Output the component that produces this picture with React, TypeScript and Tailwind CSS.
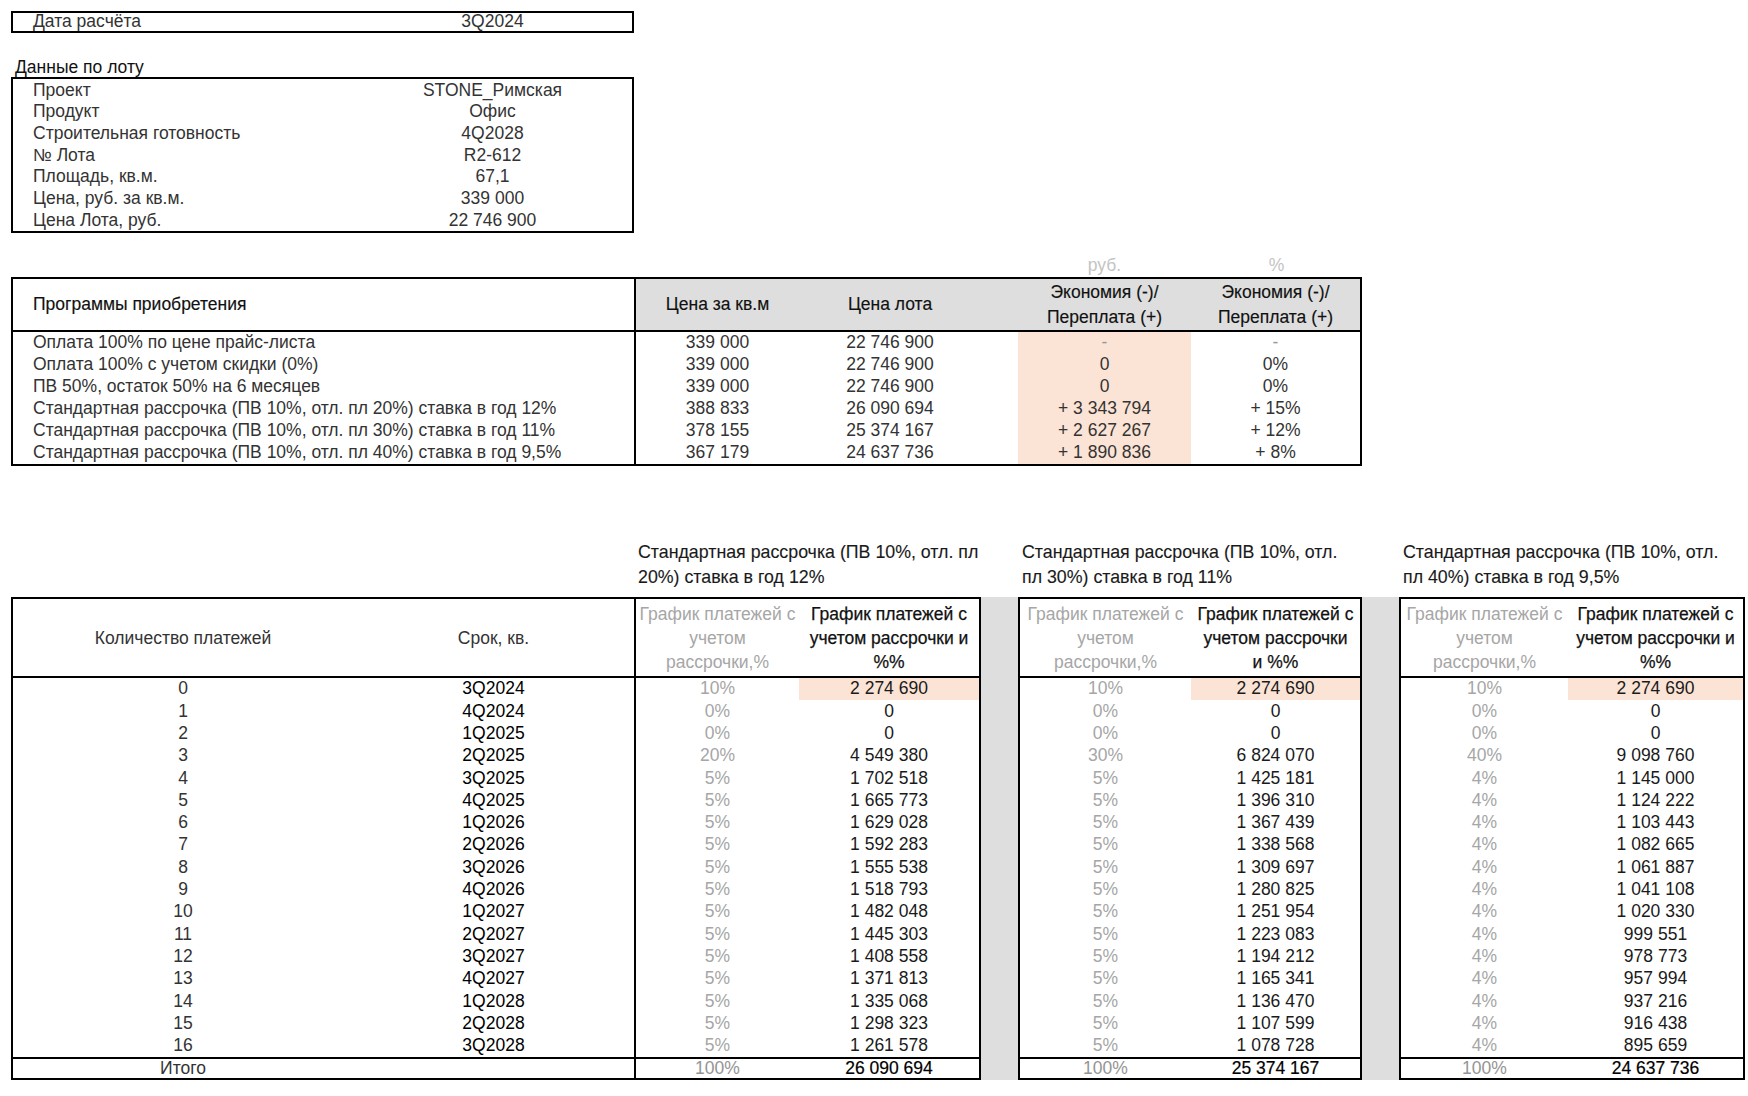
import React from 'react';

const lot = [
  ['Проект', 'STONE_Римская'],
  ['Продукт', 'Офис'],
  ['Строительная готовность', '4Q2028'],
  ['№ Лота', 'R2-612'],
  ['Площадь, кв.м.', '67,1'],
  ['Цена, руб. за кв.м.', '339 000'],
  ['Цена Лота, руб.', '22 746 900'],
];

const programs = [
  ['Оплата 100% по цене прайс-листа', '339 000', '22 746 900', '-', '-'],
  ['Оплата 100% с учетом скидки (0%)', '339 000', '22 746 900', '0', '0%'],
  ['ПВ 50%, остаток 50% на 6 месяцев', '339 000', '22 746 900', '0', '0%'],
  ['Стандартная рассрочка (ПВ 10%, отл. пл 20%) ставка в год 12%', '388 833', '26 090 694', '+ 3 343 794', '+ 15%'],
  ['Стандартная рассрочка (ПВ 10%, отл. пл 30%) ставка в год 11%', '378 155', '25 374 167', '+ 2 627 267', '+ 12%'],
  ['Стандартная рассрочка (ПВ 10%, отл. пл 40%) ставка в год 9,5%', '367 179', '24 637 736', '+ 1 890 836', '+ 8%'],
];

// n, period, [pct, value] x3
const schedule: [string, string, string, string, string, string, string, string][] = [
  ['0', '3Q2024', '10%', '2 274 690', '10%', '2 274 690', '10%', '2 274 690'],
  ['1', '4Q2024', '0%', '0', '0%', '0', '0%', '0'],
  ['2', '1Q2025', '0%', '0', '0%', '0', '0%', '0'],
  ['3', '2Q2025', '20%', '4 549 380', '30%', '6 824 070', '40%', '9 098 760'],
  ['4', '3Q2025', '5%', '1 702 518', '5%', '1 425 181', '4%', '1 145 000'],
  ['5', '4Q2025', '5%', '1 665 773', '5%', '1 396 310', '4%', '1 124 222'],
  ['6', '1Q2026', '5%', '1 629 028', '5%', '1 367 439', '4%', '1 103 443'],
  ['7', '2Q2026', '5%', '1 592 283', '5%', '1 338 568', '4%', '1 082 665'],
  ['8', '3Q2026', '5%', '1 555 538', '5%', '1 309 697', '4%', '1 061 887'],
  ['9', '4Q2026', '5%', '1 518 793', '5%', '1 280 825', '4%', '1 041 108'],
  ['10', '1Q2027', '5%', '1 482 048', '5%', '1 251 954', '4%', '1 020 330'],
  ['11', '2Q2027', '5%', '1 445 303', '5%', '1 223 083', '4%', '999 551'],
  ['12', '3Q2027', '5%', '1 408 558', '5%', '1 194 212', '4%', '978 773'],
  ['13', '4Q2027', '5%', '1 371 813', '5%', '1 165 341', '4%', '957 994'],
  ['14', '1Q2028', '5%', '1 335 068', '5%', '1 136 470', '4%', '937 216'],
  ['15', '2Q2028', '5%', '1 298 323', '5%', '1 107 599', '4%', '916 438'],
  ['16', '3Q2028', '5%', '1 261 578', '5%', '1 078 728', '4%', '895 659'],
];

const totals = [
  ['100%', '26 090 694'],
  ['100%', '25 374 167'],
  ['100%', '24 637 736'],
];

function GrayHead() {
  return (
    <div className="text-[#a6a6a6]">
      График платежей с<br />
      учетом
      <br />
      рассрочки,%
    </div>
  );
}

function PlanBox({
  idx,
  pctW,
  head,
}: {
  idx: number;
  pctW: string;
  head: React.ReactNode;
}) {
  return (
    <div className="flex flex-1 flex-col border-2 border-black">
      <div className="flex h-[79px] border-b-2 border-black leading-[24px]">
        <div className={`${pctW} flex items-center justify-center text-center`}>
          <GrayHead />
        </div>
        <div className="flex flex-1 items-center justify-center text-center text-[#111] [-webkit-text-stroke:0.25px_#111]">
          {head}
        </div>
      </div>
      {schedule.map((r, i) => (
        <div key={i} className="flex h-[22.3px] items-center">
          <div className={`${pctW} text-center text-[#a6a6a6]`}>{r[2 + idx * 2]}</div>
          <div
            className={`flex h-full flex-1 items-center justify-center text-[#1a1a1a] ${
              i === 0 ? 'bg-[#fbe3d6]' : ''
            }`}
          >
            {r[3 + idx * 2]}
          </div>
        </div>
      ))}
      <div className="flex flex-1 items-center border-t-2 border-black">
        <div className={`${pctW} text-center text-[#949494]`}>{totals[idx][0]}</div>
        <div className="flex-1 text-center text-[#000] [-webkit-text-stroke:0.2px_#000]">
          {totals[idx][1]}
        </div>
      </div>
    </div>
  );
}

export default function App() {
  return (
    <div className="min-h-[1096px] w-[1748px] bg-white pl-[11px] pt-[11px] font-['Liberation_Sans',Arial,sans-serif] text-[17.5px] leading-none whitespace-nowrap text-[#333]">
      {/* дата расчёта */}
      <div className="flex h-[22px] w-[623px] items-center border-2 border-black">
        <div className="w-[340px] pl-[20px]">Дата расчёта</div>
        <div className="flex-1 text-center">3Q2024</div>
      </div>

      {/* данные по лоту */}
      <div className="mt-[22px] flex h-[22px] items-end pb-[1px] pl-[4px] text-[#111]">Данные по лоту</div>
      <div className="flex h-[156px] w-[623px] flex-col border-2 border-black">
        {lot.map(([k, v]) => (
          <div key={k} className="flex flex-1 items-center pt-[1px]">
            <div className="w-[340px] pl-[20px]">{k}</div>
            <div className="flex-1 text-center">{v}</div>
          </div>
        ))}
      </div>

      {/* программы */}
      <div className="mt-[22px] flex h-[22px] items-center text-[#c4c4c4]">
        <div className="w-[1007px]" />
        <div className="w-[173px] text-center">руб.</div>
        <div className="w-[171px] text-center">%</div>
      </div>
      <div className="w-[1351px] border-2 border-black">
        <div className="flex h-[53px] border-b-2 border-black">
          <div className="flex w-[621px] items-center pl-[20px] text-[#111] [-webkit-text-stroke:0.15px_#111]">
            Программы приобретения
          </div>
          <div className="flex flex-1 items-center border-l-2 border-black bg-[#dedede] text-center leading-[24.5px] text-[#111] [-webkit-text-stroke:0.15px_#111]">
            <div className="w-[163px]">Цена за кв.м</div>
            <div className="w-[182px]">Цена лота</div>
            <div className="w-[37px]" />
            <div className="w-[173px]">
              Экономия (-)/
              <br />
              Переплата (+)
            </div>
            <div className="flex-1">
              Экономия (-)/
              <br />
              Переплата (+)
            </div>
          </div>
        </div>
        {programs.map((p, i) => (
          <div key={i} className="flex h-[22px]">
            <div className="flex w-[621px] items-center pl-[20px]">{p[0]}</div>
            <div className="flex flex-1 items-center border-l-2 border-black text-center">
              <div className="w-[163px]">{p[1]}</div>
              <div className="w-[182px]">{p[2]}</div>
              <div className="w-[37px]" />
              <div className={`flex h-full w-[173px] items-center justify-center bg-[#fbe3d6] ${i === 0 ? 'text-[#999]' : ''}`}>
                {p[3]}
              </div>
              <div className={`flex-1 ${i === 0 ? 'text-[#999]' : ''}`}>{p[4]}</div>
            </div>
          </div>
        ))}
      </div>

      {/* графики платежей */}
      <div className="mt-[74px] flex text-[17.8px] leading-[24.5px] text-[#1a1a1a] [-webkit-text-stroke:0.12px_#1a1a1a]">
        <div className="w-[623px]" />
        <div className="w-[347px] pl-[4px]">
          Стандартная рассрочка (ПВ 10%, отл. пл
          <br />
          20%) ставка в год 12%
        </div>
        <div className="w-[37px]" />
        <div className="w-[344px] pl-[4px]">
          Стандартная рассрочка (ПВ 10%, отл.
          <br />
          пл 30%) ставка в год 11%
        </div>
        <div className="w-[37px]" />
        <div className="w-[346px] pl-[4px]">
          Стандартная рассрочка (ПВ 10%, отл.
          <br />
          пл 40%) ставка в год 9,5%
        </div>
      </div>

      <div className="mt-[8px] flex h-[483px] w-[1734px]">
        <div className="flex w-[970px] flex-col border-2 border-black">
          <div className="flex h-[79px] border-b-2 border-black leading-[24px]">
            <div className="flex w-[340px] items-center justify-center">Количество платежей</div>
            <div className="flex w-[281px] items-center justify-center">Срок, кв.</div>
            <div className="flex w-[165px] items-center justify-center border-l-2 border-black text-center">
              <GrayHead />
            </div>
            <div className="flex flex-1 items-center justify-center text-center text-[#111] [-webkit-text-stroke:0.25px_#111]">
              График платежей с<br />
              учетом рассрочки и<br />
              %%
            </div>
          </div>
          {schedule.map((r, i) => (
            <div key={i} className="flex h-[22.3px] items-center">
              <div className="w-[340px] text-center">{r[0]}</div>
              <div className="w-[281px] text-center text-[#000]">{r[1]}</div>
              <div className="flex h-full w-[165px] items-center justify-center border-l-2 border-black text-[#a6a6a6]">
                {r[2]}
              </div>
              <div
                className={`flex h-full flex-1 items-center justify-center text-[#1a1a1a] ${
                  i === 0 ? 'bg-[#fbe3d6]' : ''
                }`}
              >
                {r[3]}
              </div>
            </div>
          ))}
          <div className="flex flex-1 border-t-2 border-black">
            <div className="flex w-[621px] items-center pr-[281px]">
              <div className="flex-1 text-center">Итого</div>
            </div>
            <div className="flex w-[165px] items-center justify-center border-l-2 border-black text-[#949494]">
              {totals[0][0]}
            </div>
            <div className="flex flex-1 items-center justify-center text-[#000] [-webkit-text-stroke:0.2px_#000]">
              {totals[0][1]}
            </div>
          </div>
        </div>

        <div className="w-[37px] bg-[#dedede]" />
        <div className="flex w-[344px]">
          <PlanBox
            idx={1}
            pctW="w-[171px]"
            head={
              <>
                График платежей с<br />
                учетом рассрочки
                <br />и %%
              </>
            }
          />
        </div>
        <div className="w-[37px] bg-[#dedede]" />
        <div className="flex w-[346px]">
          <PlanBox
            idx={2}
            pctW="w-[167px]"
            head={
              <>
                График платежей с<br />
                учетом рассрочки и<br />
                %%
              </>
            }
          />
        </div>
      </div>
    </div>
  );
}
